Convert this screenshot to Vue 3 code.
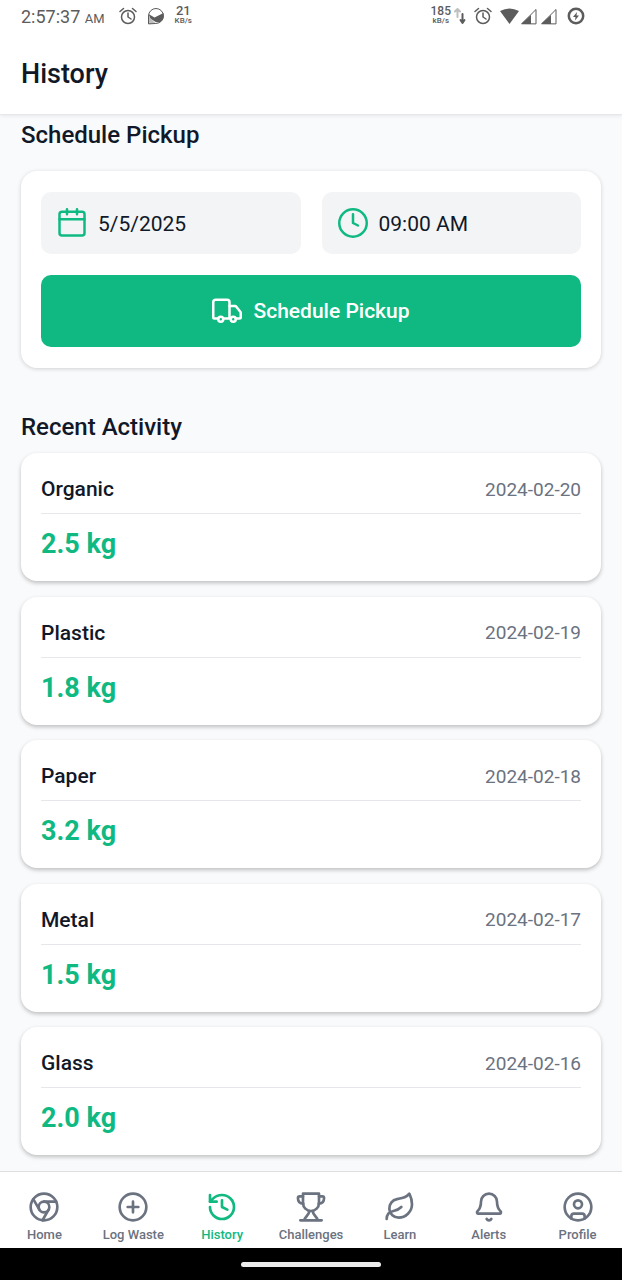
<script setup>
import { ref } from 'vue'

const date = ref('5/5/2025')
const time = ref('09:00 AM')

const activity = [
  { type: 'Organic', date: '2024-02-20', amount: '2.5 kg' },
  { type: 'Plastic', date: '2024-02-19', amount: '1.8 kg' },
  { type: 'Paper', date: '2024-02-18', amount: '3.2 kg' },
  { type: 'Metal', date: '2024-02-17', amount: '1.5 kg' },
  { type: 'Glass', date: '2024-02-16', amount: '2.0 kg' },
]

const tabs = [
  {
    label: 'Home',
    paths: [
      'M22 12a10 10 0 1 1-20 0 10 10 0 0 1 20 0z',
      'M16 12a4 4 0 1 1-8 0 4 4 0 0 1 8 0z',
      'M21.17 8H12M3.95 6.06 8.54 14M10.88 21.94 15.46 14',
    ],
  },
  { label: 'Log Waste', paths: ['M22 12a10 10 0 1 1-20 0 10 10 0 0 1 20 0z', 'M8 12h8M12 8v8'] },
  {
    label: 'History',
    active: true,
    paths: ['M3 12a9 9 0 1 0 9-9 9.75 9.75 0 0 0-6.74 2.74L3 8', 'M3 3v5h5', 'M12 7v5l4 2'],
  },
  {
    label: 'Challenges',
    paths: [
      'M6 4H3.500a1.300 1.300 0 0 0-1.300 1.300C2.200 8 3.500 9.500 6.200 9.500M18 4h2.500a1.300 1.300 0 0 1 1.300 1.300c0 2.700-1.300 4.200-4 4.200',
      'M4 22h16M7 22c.3-3 3.300-3.200 3.800-7M17 22c-.3-3-3.300-3.200-3.800-7',
      'M18 2H6v7a6 6 0 0 0 12 0V2z',
    ],
  },
  {
    label: 'Learn',
    paths: [
      'M11 20A7 7 0 0 1 9.800 6.100C15.500 5 17 4.480 19 2c1 2 2 4.180 2 8 0 5.500-4.780 10-10 10z',
      'M2 21c0-3 1.850-5.360 5.080-6C9.500 14.520 12 13 13 12',
    ],
  },
  {
    label: 'Alerts',
    paths: [
      'M3.260 15.330A1 1 0 0 0 4 17h16a1 1 0 0 0 .740-1.670C19.410 13.960 18 12.500 18 8A6 6 0 0 0 6 8c0 4.500-1.410 5.960-2.740 7.330',
      'M10.270 21a2 2 0 0 0 3.460 0',
    ],
  },
  {
    label: 'Profile',
    paths: [
      'M22 12a10 10 0 1 1-20 0 10 10 0 0 1 20 0z',
      'M15 10a3 3 0 1 1-6 0 3 3 0 0 1 6 0z',
      'M7 20.660V19a2 2 0 0 1 2-2h6a2 2 0 0 1 2 2v1.660',
    ],
  },
]
</script>

<template>
  <div class="page">
    <header class="top">
      <div class="status">
        <div class="group">
          <span class="clock">2:57:37 <small>AM</small></span>
          <svg class="glyph alarm" viewBox="0 0 18 18">
            <circle cx="9" cy="10" r="6.500" />
            <path d="M9 6v4l3 2M1 4.500 4.500 1.500M17 4.500 13.500 1.500" />
          </svg>
          <svg class="glyph" viewBox="0 0 18 18">
            <path class="thin" d="M1.500 16.500V9A7.500 7.500 0 1 1 9 16.500z" />
            <path class="solid" d="M1.500 7 7.500 10.500 16.500 6v3a7.500 7.500 0 0 1-4 6.500q-4 0-7-2.500-3-2-4-6z" />
            <path class="solid faint" d="M1 8 6 14l4 3H1z" />
          </svg>
          <span class="rate large"><b>21</b><i>KB/s</i></span>
        </div>
        <div class="group right">
          <span class="rate"><b>185</b><i>kB/s</i></span>
          <svg class="arrows" viewBox="0 0 12 18">
            <path class="faint" d="M3.500 10V2M1 4.500 3.500 2 6 4.500" />
            <path d="M8.500 7v8M6.500 13l2 3 2-3" />
          </svg>
          <svg class="glyph alarm" viewBox="0 0 18 18">
            <circle cx="9" cy="10" r="6.500" />
            <path d="M9 6v4l3 2M1 4.500 4.500 1.500M17 4.500 13.500 1.500" />
          </svg>
          <svg class="signals" viewBox="0 0 58 18">
            <path class="solid" d="M0 4Q9.500-1 19 4L9.500 17z" />
            <path class="solid" d="M21 17 31 8v9zM41 17 51 8v9z" />
            <path class="thin" d="M22 16.500 36 2.500v14zM42 16.500 56 2.500v14z" />
          </svg>
          <svg class="glyph power" viewBox="0 0 18 18">
            <circle cx="9" cy="9" r="7.200" />
            <path class="solid" d="M10 5 6 10h2.500l-.5 3.500 4-5H9.500z" />
          </svg>
        </div>
      </div>
      <h1>History</h1>
    </header>

    <main>
      <h2>Schedule Pickup</h2>
      <form class="card pickup" @submit.prevent>
        <div class="fields">
          <label class="field">
            <svg viewBox="0 0 24 24">
              <rect x="2" y="3" width="20" height="19" rx="2" />
              <path d="M8 1v4M16 1v4M2 9h20" />
            </svg>
            <input v-model="date" type="text" aria-label="Pickup date" />
          </label>
          <label class="field">
            <svg viewBox="0 0 24 24">
              <circle cx="12" cy="12" r="11" />
              <path d="M12 5v7l4 2" />
            </svg>
            <input v-model="time" type="text" aria-label="Pickup time" />
          </label>
        </div>
        <button type="submit">
          <svg viewBox="0 0 24 24">
            <path d="M14 18V5a2 2 0 0 0-2-2H3a2 2 0 0 0-2 2v12a1 1 0 0 0 1 1h3M15 18H9" />
            <path d="M19 18h3a1 1 0 0 0 1-1v-3.650a1 1 0 0 0-.22-.62l-3.480-4.350A1 1 0 0 0 18.520 8H14" />
            <circle cx="17" cy="18.500" r="2" />
            <circle cx="7" cy="18.500" r="2" />
          </svg>
          Schedule Pickup
        </button>
      </form>

      <h2 class="recent">Recent Activity</h2>
      <ul>
        <li v-for="item in activity" :key="item.date" class="card entry">
          <div class="row">
            <h3>{{ item.type }}</h3>
            <time :datetime="item.date">{{ item.date }}</time>
          </div>
          <p>{{ item.amount }}</p>
        </li>
      </ul>
    </main>

    <nav>
      <a v-for="tab in tabs" :key="tab.label" href="#" :class="{ active: tab.active }">
        <svg viewBox="0 0 24 24"><path v-for="d in tab.paths" :key="d" :d="d" /></svg>
        {{ tab.label }}
      </a>
    </nav>
    <div class="gesture"><span></span></div>
  </div>
</template>

<style>
body {
  margin: 0;
  background: #f9fafb;
}
</style>

<style scoped>
* {
  box-sizing: border-box;
}
.page {
  display: flex;
  flex-direction: column;
  min-height: 100vh;
  font-family: Roboto, "Liberation Sans", sans-serif;
  color: #111827;
  background: #f9fafb;
}
svg {
  flex: none;
  fill: none;
  stroke: currentColor;
  stroke-width: 2;
  stroke-linecap: round;
  stroke-linejoin: round;
}
h1, h2, h3, p, ul {
  margin: 0;
  padding: 0;
}
h1, h2, h3 {
  font-weight: 500;
}
.top {
  height: 115px;
  background: #fff;
  border-bottom: 1px solid #e5e7eb;
  box-shadow: 0 1px 4px rgba(0, 0, 0, 0.08);
}
.status {
  display: flex;
  justify-content: space-between;
  height: 32px;
  padding: 0 37px 0 21px;
  color: #5c5c5c;
}
.group {
  display: flex;
  align-items: center;
  gap: 10px;
}
.group.right {
  gap: 8px;
}
.clock {
  margin-right: 4px;
  font-size: 18px;
}
.clock small {
  font-size: 13px;
}
.glyph {
  width: 18px;
  height: 18px;
  stroke-width: 1.5;
}
.solid {
  fill: currentColor;
  stroke: none;
}
.thin {
  stroke-width: 1;
}
.faint {
  opacity: 0.4;
}
.power {
  margin-left: 1px;
  stroke-width: 2.5;
}
.arrows {
  width: 12px;
  height: 18px;
  margin-left: -5px;
}
.signals {
  width: 58px;
  height: 18px;
}
.rate {
  display: flex;
  flex-direction: column;
  align-items: center;
  line-height: 10px;
}
.rate b {
  font-size: 12px;
  font-weight: 500;
}
.rate.large b {
  font-size: 13px;
}
.rate i {
  font-size: 8px;
  font-style: normal;
  font-weight: 500;
}
h1 {
  padding: 0 21px;
  font-size: 27px;
  line-height: 84px;
}
h2 {
  font-size: 24px;
  line-height: 40px;
}
main {
  flex: 1;
  display: flex;
  flex-direction: column;
  padding: 0 21px 16px;
}
.card {
  background: #fff;
  border-radius: 16px;
  box-shadow: 0 1px 4px rgba(0, 0, 0, 0.17);
}
.pickup {
  display: flex;
  flex-direction: column;
  gap: 21px;
  margin-top: 16px;
  padding: 21px 20px;
}
.fields {
  display: flex;
  gap: 21px;
}
.field {
  flex: 1;
  display: flex;
  align-items: center;
  gap: 11px;
  min-width: 0;
  height: 62px;
  padding: 0 16px;
  border-radius: 10px;
  background: #f3f4f6;
}
.field svg {
  width: 30px;
  height: 30px;
  color: #10b981;
}
.field input {
  flex: 1;
  min-width: 0;
  padding: 2px 0 0;
  border: 0;
  background: none;
  color: inherit;
  font: inherit;
  font-size: 21px;
}
button {
  display: flex;
  align-items: center;
  justify-content: center;
  gap: 11px;
  height: 72px;
  border: 0;
  border-radius: 10px;
  background: #10b981;
  color: #fff;
  font: inherit;
  font-size: 21px;
  font-weight: 500;
}
button svg {
  width: 30px;
  height: 30px;
}
.recent {
  margin-top: 39px;
}
ul {
  flex: 1;
  display: flex;
  flex-direction: column;
  justify-content: space-between;
  margin-top: 6px;
  list-style: none;
}
.entry {
  height: 128px;
  padding: 20px;
  box-shadow: 0 2px 4px rgba(0, 0, 0, 0.24);
}
.row {
  display: flex;
  align-items: center;
  justify-content: space-between;
  height: 41px;
  padding-bottom: 8px;
  border-bottom: 1px solid #e5e7eb;
}
h3 {
  font-size: 21px;
}
time {
  font-size: 19px;
  color: #6b7280;
}
p {
  margin-top: 10px;
  font-size: 27px;
  font-weight: 700;
  line-height: 40px;
  color: #10b981;
}
nav {
  display: flex;
  height: 77px;
  border-top: 1px solid #dcdee0;
  background: #fff;
}
nav a {
  flex: 1 1 0;
  min-width: 0;
  display: flex;
  flex-direction: column;
  align-items: center;
  gap: 4px;
  padding-top: 19px;
  color: #6b7280;
  font-size: 13px;
  font-weight: 500;
  line-height: 16px;
  text-decoration: none;
  white-space: nowrap;
}
nav a.active {
  color: #10b981;
}
nav svg {
  width: 32px;
  height: 32px;
}
.gesture {
  display: flex;
  align-items: center;
  justify-content: center;
  height: 32px;
  background: #000;
}
.gesture span {
  width: 140px;
  height: 5px;
  border-radius: 3px;
  background: #ececec;
}
</style>
